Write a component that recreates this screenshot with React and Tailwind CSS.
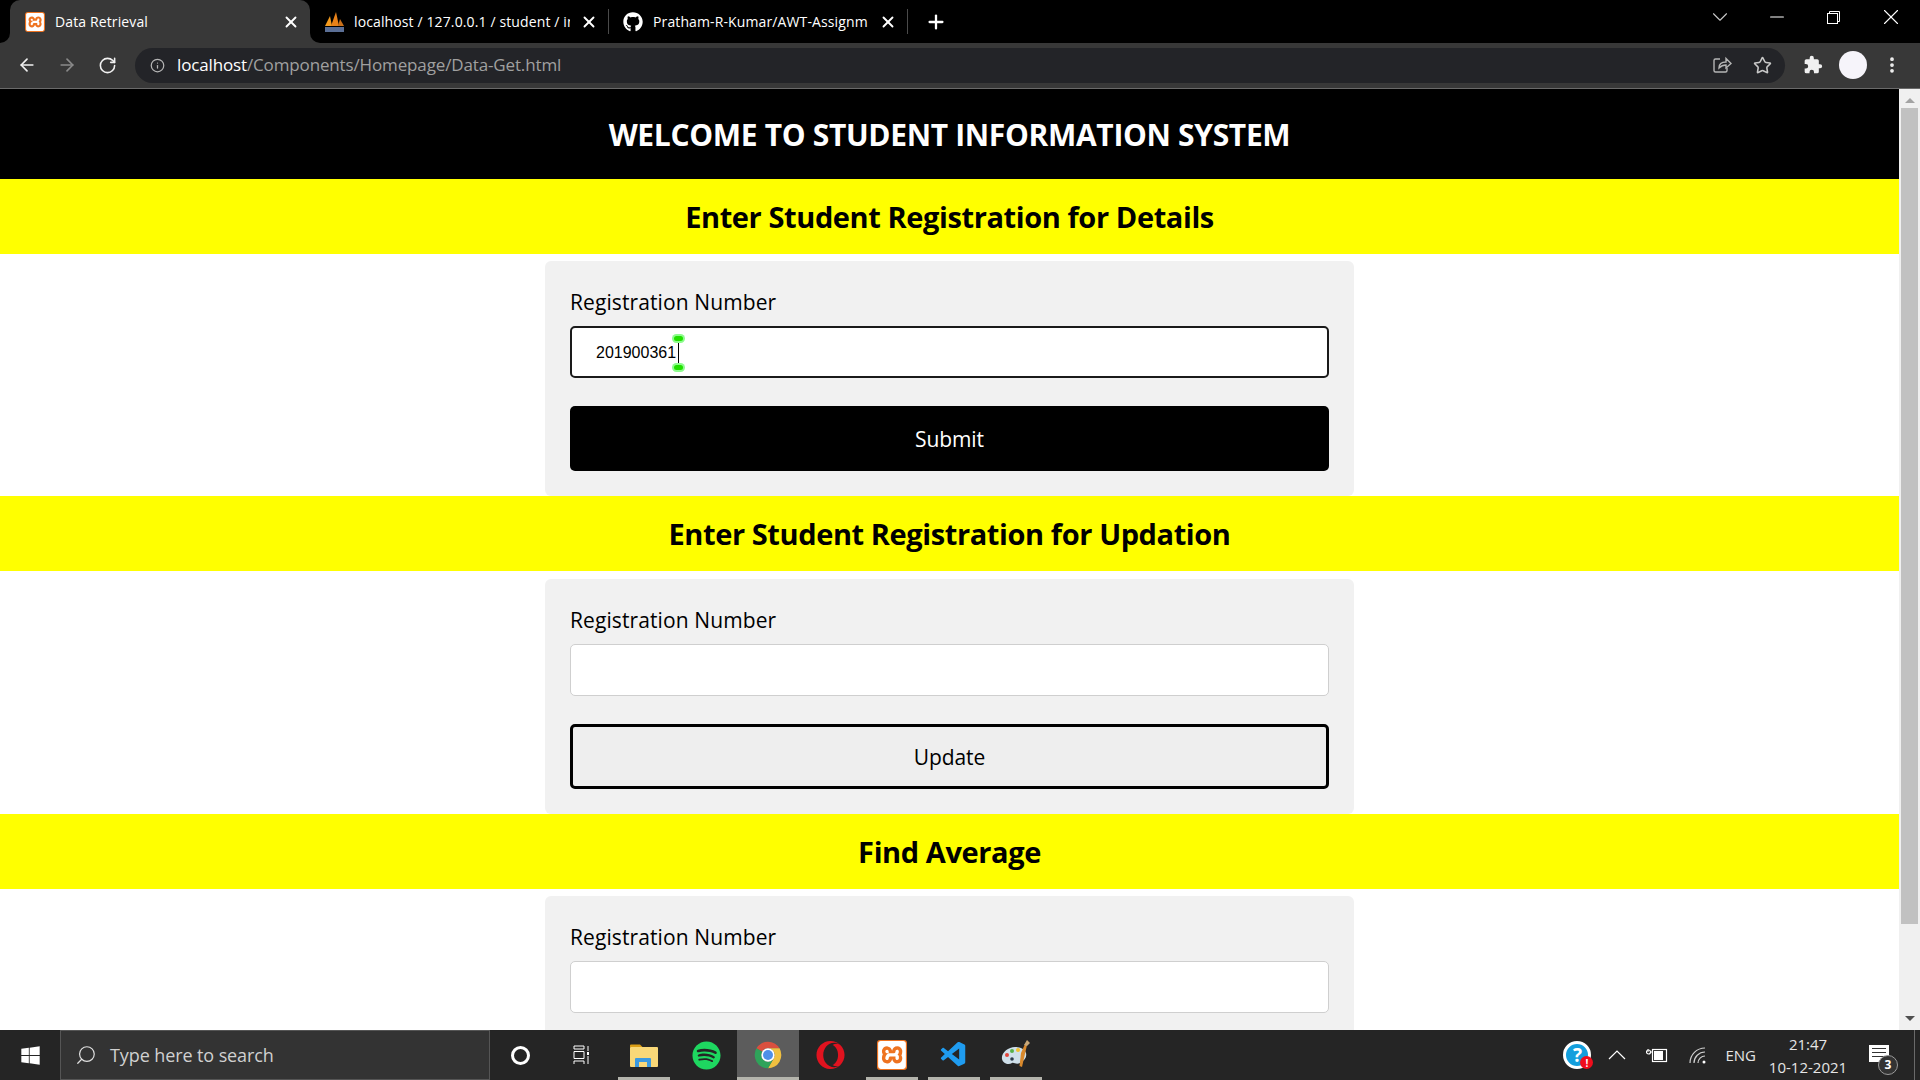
import React from "react";
import { ArrowLeft, ArrowRight, RotateCw, Info, Star, MoreVertical, X, Plus, ChevronDown, Minus, Search } from "lucide-react";
import { FaGithub, FaSpotify, FaOpera, FaWindows } from "react-icons/fa";
import { SiXampp } from "react-icons/si";
import { VscVscode } from "react-icons/vsc";

const XamppIcon = ({ size = 20 }) => (
  <span className="flex items-center justify-center rounded-[3px] bg-[#ee7320]" style={{ width: size, height: size }}>
    <SiXampp size={size - 2} color="#fff" />
  </span>
);

const PmaIcon = () => (
  <svg width="20" height="20" viewBox="0 0 20 20">
    <path d="M1 14 L6 4 L8 14Z" fill="#f29a1e" />
    <path d="M7 14 L12 0 L15 14Z" fill="#e8821a" />
    <path d="M14 14 L16 7 L20 14Z" fill="#c9701a" />
    <rect x="1" y="15" width="19" height="5" fill="#5b6f96" />
  </svg>
);

const ChromeIcon = () => (
  <svg width="32" height="32" viewBox="0 0 48 48">
    <path d="M6.680 14A20 20 0 0 1 41.320 14L24 14A10 10 0 0 0 15.340 19Z" fill="#d9503f" />
    <path d="M41.320 14A20 20 0 0 1 24 44L32.660 29A10 10 0 0 0 24 14Z" fill="#f0c040" />
    <path d="M24 44A20 20 0 0 1 6.680 14L15.340 19A10 10 0 0 0 32.660 29Z" fill="#2fa35a" />
    <circle cx="24" cy="24" r="10" fill="#fff" />
    <circle cx="24" cy="24" r="7.500" fill="#4f8fe8" />
  </svg>
);

const FolderIcon = () => (
  <svg width="28" height="23" viewBox="0 0 28 23">
    <path d="M0 1.500A1 1 0 0 1 1 .500h9l3 3H0z" fill="#dc9f16" />
    <rect y="3" width="28" height="20" rx="1" fill="#f9d878" />
    <path d="M5 23v-8a1 1 0 0 1 1-1h14a1 1 0 0 1 1 1v8h-4v-5h-8v5z" fill="#3c9ae0" />
  </svg>
);

const PaintIcon = () => (
  <svg width="32" height="32" viewBox="0 0 32 32">
    <path d="M15 8C8 8 1 14 2 20c1 5 7 6 10 4 2-1 4 2 8 0 5-3 7-6 6-10-1-4-6-6-11-6z" fill="#cfe0ea" />
    <circle cx="7" cy="16" r="2" fill="#e2453c" />
    <circle cx="12" cy="12" r="2" fill="#57b04a" />
    <circle cx="18" cy="11" r="2" fill="#f3c02f" />
    <circle cx="12" cy="20" r="1.800" fill="#2b3a4a" />
    <path d="M21 14 L25 5 L27 6 L22 28 L19.500 27Z" fill="#d9892c" />
    <path d="M24 6 L27 1 L30 4 L27 7Z" fill="#c9a878" />
  </svg>
);

const ShareIcon = () => (
  <svg width="20" height="20" viewBox="0 0 20 20" fill="none" stroke="#b5b5b5" strokeWidth="1.400">
    <path d="M8 4H3.500A1.500 1.500 0 0 0 2 5.500v10A1.500 1.500 0 0 0 3.500 17h10a1.500 1.500 0 0 0 1.500-1.500V13" />
    <path d="M7 13c0-4 3-6 7-6V3.500l5 5-5 4.500V10c-3 0-5 1-7 3z" />
  </svg>
);

const PuzzleIcon = () => (
  <svg width="20" height="20" viewBox="0 0 24 24" fill="#f1f1f1">
    <path d="M20.500 11H19V7a2 2 0 0 0-2-2h-4V3.500a2.500 2.500 0 0 0-5 0V5H4a2 2 0 0 0-2 2v3.800h1.500a2.700 2.700 0 0 1 0 5.400H2V20a2 2 0 0 0 2 2h3.800v-1.500a2.700 2.700 0 0 1 5.400 0V22H17a2 2 0 0 0 2-2v-4h1.500a2.500 2.500 0 0 0 0-5z" />
  </svg>
);

const RestoreIcon = () => (
  <svg width="13" height="13" viewBox="0 0 13 13" fill="none" stroke="#fff" strokeWidth="1">
    <rect x="0.500" y="2.500" width="10" height="10" />
    <path d="M2.500 2.500v-2h10v10h-2" />
  </svg>
);

const TaskViewIcon = () => (
  <svg width="16" height="20" viewBox="0 0 16 20" fill="none" stroke="#fff" strokeWidth="1">
    <path d="M1 1h10M1 4h10M1 6.500h10v7H1zM1 16h10M1 19v-3M11 19v-3M1 1v3M11 1v3" />
    <path d="M15 1v5M15 11v8" />
    <rect x="14" y="7" width="2" height="3" fill="#fff" stroke="none" />
  </svg>
);

const HelpIcon = () => (
  <span className="relative flex h-[28px] w-[28px] items-center justify-center rounded-full border-[3px] border-white bg-[#149fdd] text-[19px] font-bold leading-none text-white">
    ?
    <span className="absolute -bottom-[3px] -right-[5px] flex h-[13px] w-[13px] items-center justify-center rounded-full bg-[#f00d1c] text-[10px] font-bold leading-none text-white">!</span>
  </span>
);

const BatteryIcon = () => (
  <svg width="22" height="18" viewBox="0 0 22 18" fill="none">
    <path d="M2 3v3" stroke="#fff" strokeWidth="1" />
    <circle cx="2.500" cy="6" r="2" stroke="#fff" strokeWidth="1.200" />
    <path d="M4.500 6H6" stroke="#fff" strokeWidth="1" />
    <rect x="6.500" y="3.500" width="14" height="12" stroke="#fff" strokeWidth="1.200" />
    <rect x="8" y="5" width="9" height="9" fill="#fff" />
  </svg>
);

const WifiIcon = () => (
  <svg width="20" height="20" viewBox="0 0 20 20" fill="none" stroke="#d0d0d0" strokeWidth="1.200">
    <path d="M2 18A15 15 0 0 1 17 3M6 18A11 11 0 0 1 17 7M10 18A7 7 0 0 1 17 11" />
    <circle cx="16" cy="17" r="1.500" fill="#fff" stroke="none" />
  </svg>
);

const Tab = ({ icon, title, active, className }) => (
  <div className={`relative flex h-full items-center pr-[10px] ${className} ${active ? "rounded-t-[10px] bg-[#383838]" : ""}`}>
    {active && (
      <>
        <span className="absolute -left-[10px] bottom-0 h-[10px] w-[10px] bg-[#383838]">
          <span className="block h-full w-full rounded-br-[10px] bg-black"></span>
        </span>
        <span className="absolute -right-[10px] bottom-0 h-[10px] w-[10px] bg-[#383838]">
          <span className="block h-full w-full rounded-bl-[10px] bg-black"></span>
        </span>
      </>
    )}
    <span className="flex w-[30px] shrink-0 items-center">{icon}</span>
    <span className="min-w-0 flex-1 overflow-hidden whitespace-nowrap pb-[1px] text-[14px] tracking-[0.12px] text-white">{title}</span>
    <X size={18} strokeWidth={2.500} color="#fff" className="ml-[10px] shrink-0" />
  </div>
);

const TaskApp = ({ children, running, active }) => (
  <div className={`relative flex h-full w-[62px] items-center justify-center ${active ? "bg-[#5c5c5c]" : ""}`}>
    {children}
    {running && <span className={`absolute bottom-0 h-[3px] bg-[#b4b4ac] ${active ? "inset-x-0" : "inset-x-[5px]"}`}></span>}
  </div>
);

const Banner = ({ children }) => (
  <div className="flex h-[75px] items-center justify-center bg-[#ffff00]">
    <h2 className="text-[29px] font-bold tracking-[-0.4px] text-black">{children}</h2>
  </div>
);

const FormCard = ({ value, button, filled, className }) => (
  <div className={`mx-auto w-[809px] rounded-[6px] bg-[#f1f1f1] p-[25px] ${className}`}>
    <label className="block h-[40px] text-[21px] leading-[32px] tracking-[0.1px] text-black">Registration Number</label>
    <div className={`flex h-[52px] items-center rounded-[5px] bg-white pl-[24px] pt-[1px] ${value ? "border-[2px] border-[#1a1a1a]" : "border border-[#cfcfcf]"} font-['Liberation_Sans',sans-serif] text-[16px] text-black`}>
      {value}
      {value && (
        <span className="relative ml-[2px] h-[24px] w-[1px] bg-black">
          <span className="absolute -left-[6px] -top-[7px] flex h-[9px] w-[13px] items-center justify-center rounded-full bg-[#8dfc8d]">
            <span className="h-[5px] w-[9px] rounded-full bg-[#22e000]"></span>
          </span>
          <span className="absolute -bottom-[7px] -left-[6px] flex h-[9px] w-[13px] items-center justify-center rounded-full bg-[#8dfc8d]">
            <span className="h-[5px] w-[9px] rounded-full bg-[#22e000]"></span>
          </span>
        </span>
      )}
    </div>
    {button && (
      <button className={`mt-[28px] flex h-[65px] w-full items-center justify-center rounded-[5px] pt-[3px] text-[21px] tracking-[-0.1px] ${filled ? "bg-black text-white" : "border-[3px] border-black bg-[#eeeeee] text-black"}`}>
        {button}
      </button>
    )}
  </div>
);

const App = () => {
  return (
    <div className="flex h-screen w-full flex-col overflow-hidden bg-white font-['Open_Sans','Noto_Sans',sans-serif]">
      {/* browser tabs */}
      <div className="flex h-[43px] shrink-0 bg-black pl-[10px]">
        <Tab active className="w-[300px] pl-[15px]" title="Data Retrieval" icon={<XamppIcon />} />
        <Tab className="w-[298px] pl-[14px]" title="localhost / 127.0.0.1 / student / in" icon={<PmaIcon />} />
        <span className="h-[25px] w-px self-center bg-[#4a4a4a]"></span>
        <Tab className="w-[298px] pl-[14px]" title="Pratham-R-Kumar/AWT-Assignm" icon={<FaGithub size={20} color="#fff" />} />
        <span className="h-[25px] w-px self-center bg-[#4a4a4a]"></span>
        <div className="flex h-full w-[56px] items-center justify-center">
          <Plus size={22} strokeWidth={2.500} color="#fff" />
        </div>
        <div className="ml-auto flex h-full items-center pb-[9px]">
          <div className="flex w-[57px] justify-center"><ChevronDown size={26} strokeWidth={1} color="#c8c8c8" /></div>
          <div className="flex w-[57px] justify-center"><Minus size={22} strokeWidth={1.200} color="#fff" /></div>
          <div className="flex w-[57px] justify-center"><RestoreIcon /></div>
          <div className="flex w-[58px] justify-center"><X size={26} strokeWidth={1} color="#fff" /></div>
        </div>
      </div>

      {/* toolbar */}
      <div className="flex h-[46px] shrink-0 items-center border-b border-[#6a6a6a] bg-[#383838] pb-[1px]">
        <div className="flex w-[135px] items-center pl-[17px]">
          <ArrowLeft size={20} color="#f1f1f1" />
          <ArrowRight size={20} color="#8a8a8a" className="ml-[20px]" />
          <RotateCw size={19} color="#f1f1f1" className="ml-[21px]" />
        </div>
        <div className="flex h-[35px] w-[1650px] items-center rounded-full bg-[#232428] pl-[15px] pr-[13px]">
          <Info size={15} color="#b5b5b5" />
          <span className="ml-[12px] text-[17px] tracking-[-0.14px] text-white">localhost<span className="text-[#a0a0a0]">/Components/Homepage/Data-Get.html</span></span>
          <div className="ml-auto flex items-center gap-[21px]">
            <ShareIcon />
            <Star size={19} color="#c8c8c8" />
          </div>
        </div>
        <div className="ml-[18px]"><PuzzleIcon /></div>
        <span className="ml-[16px] h-[28px] w-[28px] rounded-full bg-[#f6f4fa]"></span>
        <MoreVertical size={20} strokeWidth={2.500} color="#f1f1f1" className="ml-[15px]" />
      </div>

      {/* page */}
      <div className="flex min-h-0 flex-1">
        <div className="min-w-0 flex-1 overflow-hidden">
          <div className="flex h-[90px] items-center justify-center bg-black">
            <h1 className="text-[30px] font-bold tracking-[-0.33px] text-white">WELCOME TO STUDENT INFORMATION SYSTEM</h1>
          </div>
          <Banner>Enter Student Registration for Details</Banner>
          <FormCard className="mt-[7px]" value="201900361" button="Submit" filled />
          <Banner>Enter Student Registration for Updation</Banner>
          <FormCard className="mt-[8px]" button="Update" />
          <Banner>Find Average</Banner>
          <FormCard className="mt-[7px]" />
        </div>
        {/* scrollbar */}
        <div className="flex w-[21px] shrink-0 flex-col items-center bg-[#f0f0f0]">
          <svg width="12" height="19" viewBox="0 0 12 19" className="shrink-0"><path d="M1 14 L6 9 L11 14Z" fill="#a3a3a3" /></svg>
          <div className="h-[816px] w-[17px] bg-[#c1c1c1]"></div>
          <svg width="12" height="19" viewBox="0 0 12 19" className="mt-auto shrink-0"><path d="M1 5 L11 5 L6 10Z" fill="#505050" /></svg>
        </div>
      </div>

      {/* windows taskbar */}
      <div className="flex h-[50px] shrink-0 items-center bg-[#252525]">
        <div className="flex w-[60px] justify-center"><FaWindows size={21} color="#fff" /></div>
        <div className="flex h-full w-[430px] items-center border border-[#555] bg-[#333333] pl-[14px]">
          <Search size={22} strokeWidth={1.300} color="#e0e0e0" className="-scale-x-100" />
          <span className="ml-[13px] text-[18px] tracking-[-0.1px] text-[#d0d0d0]">Type here to search</span>
        </div>
        <div className="flex h-full items-center">
          <div className="flex w-[60px] justify-center">
            <span className="h-[19px] w-[19px] rounded-full border-[3px] border-white"></span>
          </div>
          <div className="mr-[2px] flex w-[61px] justify-center"><TaskViewIcon /></div>
          <TaskApp running><FolderIcon /></TaskApp>
          <TaskApp><FaSpotify size={29} color="#1ed760" /></TaskApp>
          <TaskApp active running><ChromeIcon /></TaskApp>
          <TaskApp><FaOpera size={29} color="#e0131f" /></TaskApp>
          <TaskApp running><XamppIcon size={30} /></TaskApp>
          <TaskApp running><VscVscode size={30} color="#1f9cf0" /></TaskApp>
          <TaskApp running><PaintIcon /></TaskApp>
        </div>
        <div className="ml-auto flex h-full items-center text-[#e6e6e6]">
          <HelpIcon />
          <svg width="20" height="12" viewBox="0 0 20 12" fill="none" stroke="#fff" strokeWidth="1.200" className="ml-[16px]"><path d="M2 10 L10 2 L18 10" /></svg>
          <div className="ml-[19px]"><BatteryIcon /></div>
          <div className="ml-[20px]"><WifiIcon /></div>
          <span className="ml-[17px] text-[15px]">ENG</span>
          <div className="ml-[15px] flex w-[74px] flex-col items-center pt-[1px] text-[15px] leading-[23px]">
            <span>21:47</span>
            <span className="whitespace-nowrap">10-12-2021</span>
          </div>
          <div className="relative ml-[24px] mr-[25px] mb-[3px] h-[17px] w-[20px] bg-white">
            <span className="absolute left-[3px] right-[3px] top-[3px] h-[1px] bg-[#333]"></span>
            <span className="absolute left-[3px] right-[3px] top-[7px] h-[1px] bg-[#333]"></span>
            <span className="absolute left-[3px] right-[3px] top-[11px] h-[1px] bg-[#333]"></span>
            <span className="absolute -bottom-[13px] -right-[9px] flex h-[20px] w-[20px] items-center justify-center rounded-full border border-[#9a9a9a] bg-[#333] text-[12px] font-bold text-white">3</span>
          </div>
          <span className="h-full w-px bg-[#6a6a6a]"></span>
          <span className="w-[5px]"></span>
        </div>
      </div>
    </div>
  );
};

export default App;
